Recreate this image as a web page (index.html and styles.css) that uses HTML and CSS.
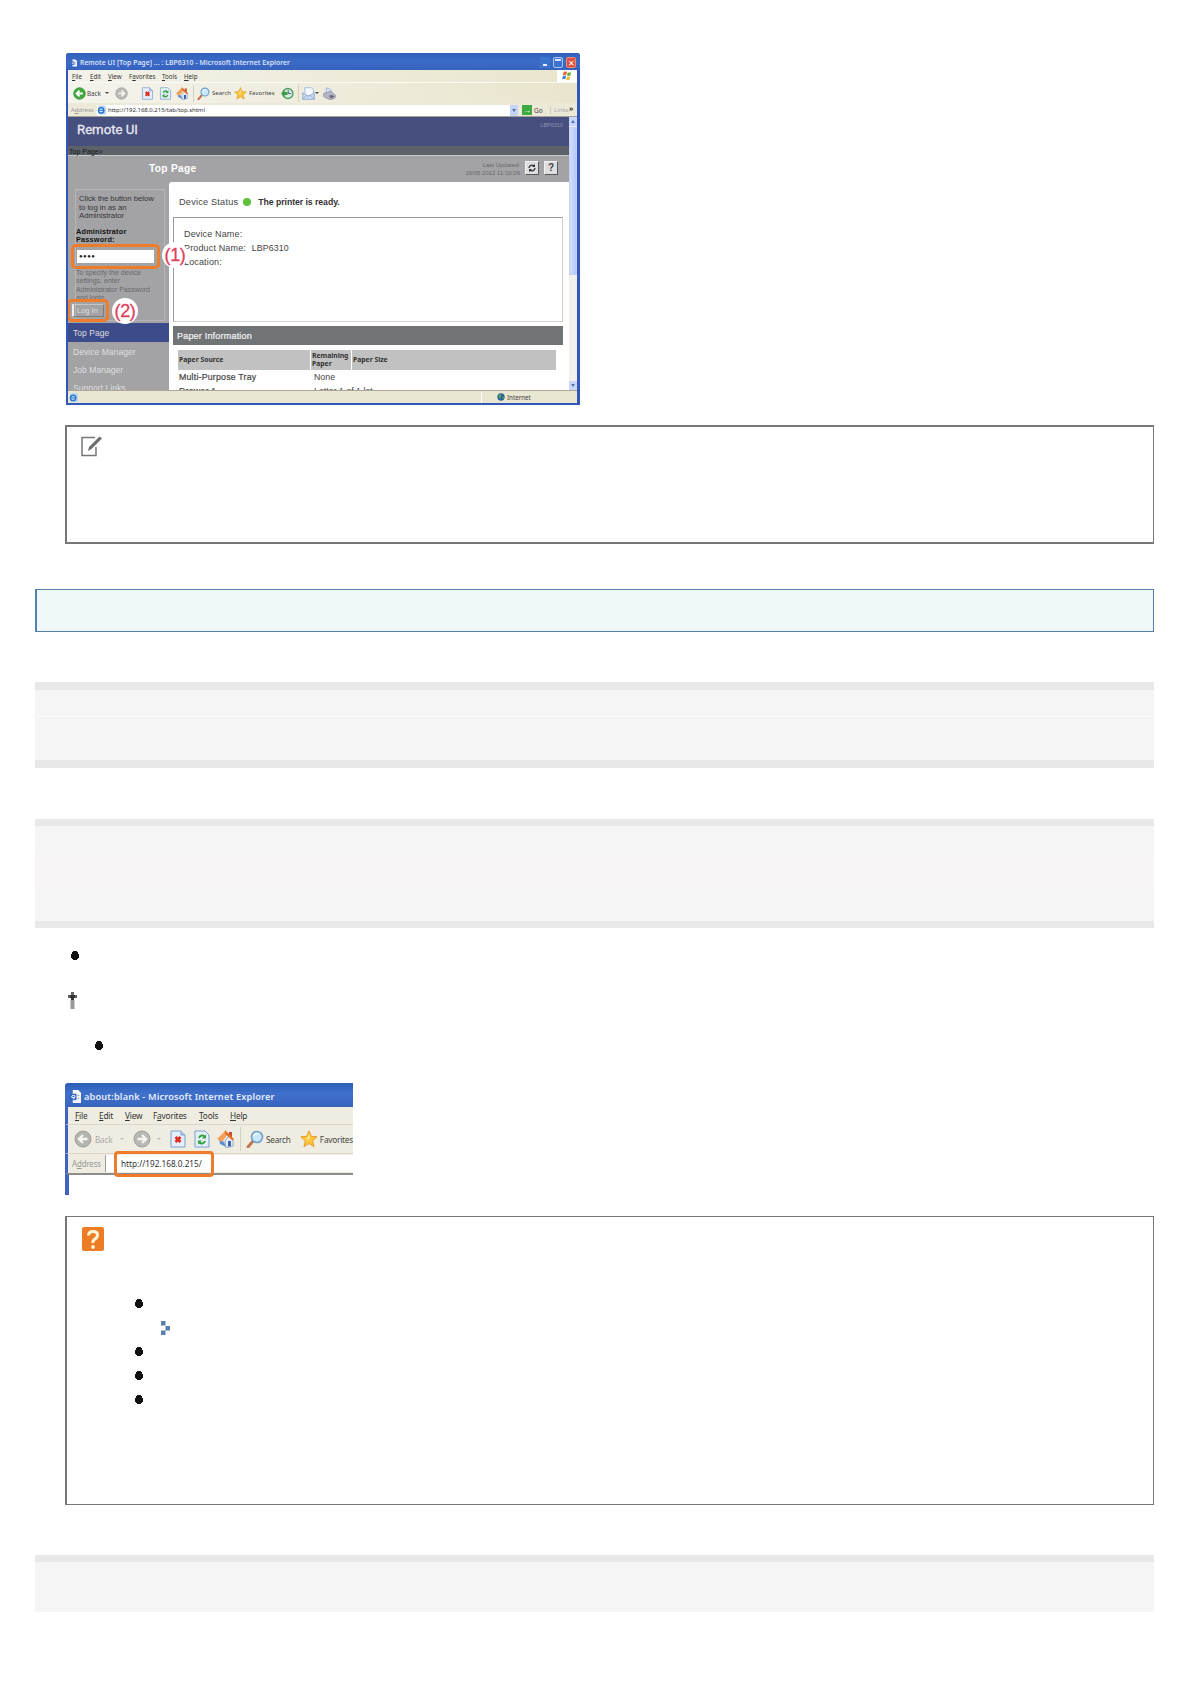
FILE: index.html
```
<!DOCTYPE html>
<html lang="en">
<head>
  <meta charset="UTF-8" />
  <meta name="viewport" content="width=device-width, initial-scale=1.0"/>
  <title>Remote UI</title>
  <link rel="stylesheet" href="styles.css">
</head>
<body>

  <!-- ICONS -->
  <svg class="sprite" aria-hidden="true">
    <symbol id="doc" viewBox="0 0 12 14">
      <path d="M3 0h6l3 3v11H3z" fill="#f4f6fa"/>
      <path d="M0 4h7v7H0z" fill="#2c62c0"/>
      <path d="M5.500 8H2a1.800 1.800 0 1 1 3.500-.5M5 9.500H3" fill="none" stroke="#fff"/>
      <path d="M8 6h2M8 9h2" stroke="#8096b8"/>
    </symbol>
    <symbol id="ie" viewBox="0 0 12 12">
      <path d="M2 0h8l2 2v10H2z" fill="#bcd4f2"/>
      <circle cx="5.500" cy="6.500" r="3.500" fill="#d9ecff" stroke="#2878c8" stroke-width="2"/>
      <path d="M3 6.500h6" stroke="#2878c8" stroke-width="1.500"/>
    </symbol>
    <symbol id="back" viewBox="0 0 18 18">
      <circle cx="9" cy="9" r="8" fill="#43a83e" stroke="#2b8b2b"/>
      <path d="M13.500 9H5m4-4L5 9l4 4" fill="none" stroke="#fff" stroke-width="2.600"/>
    </symbol>
    <symbol id="back-off" viewBox="0 0 18 18">
      <circle cx="9" cy="9" r="8" fill="#b5b5b0" stroke="#a1a19c"/>
      <path d="M13.500 9H5m4-4L5 9l4 4" fill="none" stroke="#f5f5f0" stroke-width="2.400"/>
    </symbol>
    <symbol id="forward" viewBox="0 0 18 18">
      <circle cx="9" cy="9" r="8" fill="#b9b9b4" stroke="#9f9f9b"/>
      <path d="M4.500 9H13M9 5l4 4-4 4" fill="none" stroke="#f5f5f0" stroke-width="2.400"/>
    </symbol>
    <symbol id="stop" viewBox="0 0 16 18">
      <path d="M1 1h10l4 4v12H1z" fill="#e5eefb" stroke="#7c9fce"/>
      <path d="M11 1v4h4" fill="#b9cdea" stroke="#7c9fce"/>
      <path d="M5.500 7l5 5m0-5l-5 5" stroke="#dc2f22" stroke-width="2.800"/>
    </symbol>
    <symbol id="refresh" viewBox="0 0 16 18">
      <path d="M1 1h10l4 4v12H1z" fill="#e5eefb" stroke="#7c9fce"/>
      <path d="M5 8c1-3 4-3 5.500-1.500M11 11c-1 3-4 3-5.500 1.500" fill="none" stroke="#31a13c" stroke-width="2"/>
      <path d="M12 4.500v4H8zM4 14.500v-4h4z" fill="#31a13c"/>
    </symbol>
    <symbol id="home" viewBox="0 0 18 18">
      <path d="M12 2h3v5h-3z" fill="#c94e28"/>
      <path d="M2 9l5 3 2 5-6-3z" fill="#5d8fd9"/>
      <path d="M8 11l4-5 4 4v6l-7 2z" fill="#e6eefb" stroke="#6b90c6" stroke-width=".7"/>
      <path d="M0 9l8-8 3 3-6 8z" fill="#f3a15a"/>
      <path d="M8 0l9 9-1.500 1.500L8 4z" fill="#e1702d"/>
      <path d="M11 11h3v5l-3 .8z" fill="#3b66ad"/>
    </symbol>
    <symbol id="search" viewBox="0 0 18 18">
      <path d="M7 11l-5 6" stroke="#c5784e" stroke-width="3" stroke-linecap="round"/>
      <circle cx="11" cy="7" r="5.500" fill="#c9e8fb" stroke="#6fa0cb" stroke-width="1.600"/>
      <path d="M8 6q1-3 4-2" fill="none" stroke="#fff" stroke-width="1.500"/>
    </symbol>
    <symbol id="star" viewBox="0 0 20 20">
      <path d="M10 1l2.600 6 6.400.6-5 4.300 1.600 6.600L10 15l-5.600 3.500L6 11.900 1 7.600 7.400 7z" fill="#fbc43a" stroke="#e3941d"/>
      <path d="M10 4l1 5-4 3z" fill="#ffeb98"/>
    </symbol>
    <symbol id="history" viewBox="0 0 18 18">
      <circle cx="9.500" cy="9" r="7" fill="#d6ebd7" stroke="#519f62" stroke-width="2"/>
      <path d="M10 4v5h4" fill="none" stroke="#4f6d9c" stroke-width="1.500"/>
      <path d="M0 9l5-5v3h4v4H5v3z" fill="#3a9d49"/>
    </symbol>
    <symbol id="mail" viewBox="0 0 18 18">
      <path d="M4 1h9l3 3v8H4z" fill="#f4f8ff" stroke="#8fa8d4"/>
      <path d="M1 8l8 5 8-5v9H1z" fill="#c9daf4" stroke="#7c9acd"/>
      <path d="M1 17l6-6m10 6l-6-6" stroke="#8aa5d1"/>
    </symbol>
    <symbol id="print" viewBox="0 0 18 18">
      <path d="M4 8l1-7 6 3 2 5z" fill="#dbe4f8" stroke="#93a3c7"/>
      <path d="M1 9l9-3 7 5v4l-7 3-9-5z" fill="#b5b6c6" stroke="#85879c"/>
      <path d="M8 12l4-1 4 2-5 3z" fill="#686a7c"/>
    </symbol>
    <symbol id="flag" viewBox="0 0 12 12">
      <path d="M2 1q2-1 4 0L5 5Q3 4 1 5z" fill="#e0672f"/>
      <path d="M7 1.500q2 1 4 0l-1 4q-2 1-4 0z" fill="#6eaa3e"/>
      <path d="M1 6q2-1 4 0l-1 4Q2 9 0 10z" fill="#4b83d4"/>
      <path d="M6 6.500q2 1 4 0l-1 4q-2 1-4 0z" fill="#eebd37"/>
    </symbol>
    <symbol id="globe" viewBox="0 0 12 12">
      <circle cx="6" cy="6" r="5.500" fill="#285e9f"/>
      <path d="M2 3l3-2 2 3-2 2 1 3-3-1zM8 5l3 1-2 4z" fill="#51a358"/>
    </symbol>
    <symbol id="dot" viewBox="0 0 8 9">
      <path d="M2 0h4v1h1v2h1v4H7v1H6v1H2V8H1V7H0V3h1V1h1z" fill="#111"/>
    </symbol>
  </svg>

  <div class="page">

    <!-- REMOTE UI WINDOW -->
    <div class="window">
      <div class="titlebar">
        <svg class="i-doc"><use href="#doc"/></svg>
        <span class="title">Remote UI [Top Page] ... : LBP6310 - Microsoft Internet Explorer</span>
        <span class="win-btn min"></span><span class="win-btn max"></span><span class="win-btn close">✕</span>
      </div>
      <div class="menubar">
        <span><u>F</u>ile</span><span><u>E</u>dit</span><span><u>V</u>iew</span><span>F<u>a</u>vorites</span><span><u>T</u>ools</span><span><u>H</u>elp</span>
        <div class="flag"><svg><use href="#flag"/></svg></div>
      </div>
      <div class="toolbar">
        <svg><use href="#back"/></svg><span class="t-back">Back</span><i class="arrow"></i>
        <svg class="t-fwd"><use href="#forward"/></svg>
        <svg class="t-stop"><use href="#stop"/></svg>
        <svg class="t-refresh"><use href="#refresh"/></svg>
        <svg class="t-home"><use href="#home"/></svg>
        <b class="sep"></b>
        <svg><use href="#search"/></svg><span class="t-search">Search</span>
        <svg><use href="#star"/></svg><span class="t-fav">Favorites</span>
        <svg><use href="#history"/></svg>
        <b class="sep"></b>
        <svg><use href="#mail"/></svg><i class="arrow"></i>
        <svg class="t-print"><use href="#print"/></svg>
      </div>
      <div class="addressbar">
        <span class="a-label">A<u>d</u>dress</span>
        <div class="a-input"><svg><use href="#ie"/></svg><span>http://192.168.0.215/tab/top.shtml</span><b class="a-drop"></b></div>
        <b class="a-go">→</b><span class="a-gotext">Go</span>
        <span class="a-links">Links</span><b class="a-more">»</b>
      </div>

      <div class="view">
        <div class="remote">
          <div class="brand"><h1>Remote UI</h1><span>LBP6310</span></div>
          <div class="crumb">Top Page&gt;</div>
          <div class="heading">
            <h2>Top Page</h2>
            <p>Last Updated:<br>16/05 2012 11:10:06</p>
            <b class="sq"><svg viewBox="0 0 10 10"><path d="M2 5a3 3 0 0 1 5-2M8 5a3 3 0 0 1-5 2" fill="none" stroke="#333" stroke-width="1.300"/><path d="M8 1v3H5zM2 9V6h3z" fill="#333"/></svg></b>
            <b class="sq">?</b>
          </div>
          <div class="columns">
            <div class="side">
              <div class="login">
                <p class="intro">Click the button below<br>to log in as an<br>Administrator</p>
                <p class="pw-label">Administrator<br>Password:</p>
                <div class="mark mark-pw"><div class="pw">●●●●</div><span class="callout c1">(1)</span></div>
                <p class="hint">To specify the device<br>settings, enter<br>Administrator Password<br>and login.</p>
                <div class="mark mark-login"><div class="btn">Log In</div><span class="callout c2">(2)</span></div>
              </div>
              <div class="nav">
                <a class="on">Top Page</a>
                <a>Device Manager</a>
                <a>Job Manager</a>
                <a>Support Links</a>
              </div>
            </div>
            <div class="main">
              <div class="status"><span>Device Status</span><i class="led"></i><b>The printer is ready.</b></div>
              <div class="info">
                <p>Device Name:</p>
                <p>Product Name: <span>LBP6310</span></p>
                <p>Location:</p>
              </div>
              <h3>Paper Information</h3>
              <div class="paper">
                <b>Paper Source</b><b>Remaining<br>Paper</b><b>Paper Size</b>
                <span class="src">Multi-Purpose Tray</span><span>None</span><span></span>
                <span class="src">Drawer 1</span><span>Letter 1 of 1 lot</span><span></span>
              </div>
            </div>
          </div>
        </div>
        <div class="scroll"><b class="up"></b><b class="thumb"></b><b class="down"></b></div>
      </div>
      <div class="statusbar"><svg><use href="#ie"/></svg><b></b><svg class="s-globe"><use href="#globe"/></svg><span>Internet</span></div>
    </div>

    <!-- NOTE -->
    <div class="note">
      <svg viewBox="0 0 22 21"><path d="M14 1.500H1v18h14V11" fill="none" stroke="#777" stroke-width="1.500"/><path d="M7 15l1-4L18.500.500l2.500 2L10.500 13z" fill="#6b6f73"/></svg>
    </div>

    <div class="section-title"></div>

    <div class="band band-1"><div class="band-line"></div></div>
    <div class="band band-2"></div>

    <!-- STEPS -->
    <div class="steps">
      <svg class="dot"><use href="#dot"/></svg>
      <svg class="dagger" viewBox="0 0 9 17"><path d="M3 0h3v3h3v3H6v2H3V6H0V3h3z" fill="#666"/><path d="M2.500 8h4v9h-4z" fill="#999"/><path d="M2 3h5v3H6v2H3V6H2z" fill="#333"/></svg>
      <svg class="dot inner"><use href="#dot"/></svg>
    </div>

    <!-- BLANK WINDOW -->
    <div class="window2">
      <div class="titlebar">
        <svg class="i-doc"><use href="#doc"/></svg>
        <span class="title">about:blank - Microsoft Internet Explorer</span>
      </div>
      <div class="menubar">
        <span><u>F</u>ile</span><span><u>E</u>dit</span><span><u>V</u>iew</span><span>F<u>a</u>vorites</span><span><u>T</u>ools</span><span><u>H</u>elp</span>
      </div>
      <div class="toolbar">
        <svg><use href="#back-off"/></svg><span class="t-back">Back</span><i class="arrow off"></i>
        <svg class="t-fwd"><use href="#forward"/></svg><i class="arrow off"></i>
        <svg class="t-stop"><use href="#stop"/></svg>
        <svg class="t-refresh"><use href="#refresh"/></svg>
        <svg class="t-home"><use href="#home"/></svg>
        <b class="sep"></b>
        <svg><use href="#search"/></svg><span class="t-search">Search</span>
        <svg><use href="#star"/></svg><span class="t-fav">Favorites</span>
      </div>
      <div class="addressbar">
        <span class="a-label">A<u>d</u>dress</span>
        <div class="a-input"><span class="url">http://192.168.0.215/</span></div>
      </div>
      <div class="blank"></div>
    </div>

    <!-- HELP -->
    <div class="help">
      <svg class="q" viewBox="0 0 22 24"><rect width="22" height="24" rx="2" fill="#ec7d25"/><path d="M6.500 8.500q0-4 4.500-4t4.500 3.500q0 2.500-2.500 4T11 16" fill="none" stroke="#fff3d8" stroke-width="3"/><circle cx="11" cy="20" r="1.900" fill="#fff3d8"/></svg>
      <svg class="dot"><use href="#dot"/></svg>
      <svg class="chev" viewBox="0 0 9 14"><path d="M0 0h4.500v4.500H0zM4.500 5H9v4.500H4.500zM0 9.500h4.500V14H0z" fill="#567fab"/></svg>
      <svg class="dot"><use href="#dot"/></svg>
      <svg class="dot"><use href="#dot"/></svg>
      <svg class="dot"><use href="#dot"/></svg>
    </div>

    <div class="band band-3"></div>
  </div>
</body>
</html>
```
FILE: styles.css
```
* {
  box-sizing: border-box;
}

body {
  margin: 0;
  background-color: #fff;
  font-family: "Liberation Sans", sans-serif;
}

h1, h2, h3, p {
  margin: 0;
}

svg {
  display: block;
  flex-shrink: 0;
}

.sprite {
  position: absolute;
  width: 0;
  height: 0;
}

.page {
  width: 1190px;
  height: 1684px;
  padding: 53px 36px 0 35px;
  overflow: hidden;
}

/* Browser window */
.window {
  width: 514px;
  height: 352px;
  margin-left: 31px;
  padding: 0 3px 2px 2px;
  background-color: #3158b8;
  border-radius: 3px 3px 0 0;
  display: flex;
  flex-direction: column;
  font-size: 6.5px;
  white-space: nowrap;
}

.titlebar {
  display: flex;
  align-items: center;
  color: #e4edfc;
  font-family: "Noto Sans", sans-serif;
  font-weight: 500;
}

.window .titlebar {
  height: 17px;
  padding: 2px 4px 0 5px;
  background: linear-gradient(#3160b8, #3c6bc8 50%, #3562bd);
  margin: 0 -3px 0 -2px;
  border-radius: 3px 3px 0 0;
}

.window .i-doc { width: 6px; height: 8px; }

.window .title {
  margin-left: 3px;
  margin-right: auto;
  font-size: 6.8px;
  letter-spacing: 0.08px;
}

.win-btn {
  width: 10px;
  height: 11px;
  margin-left: 3px;
  border-radius: 2px;
  background-color: #3b74cf;
  border: 1px solid #6f9be0;
}

.min { border-width: 0; box-shadow: inset 3px 0 #3b74cf, inset -3px 0 #3b74cf, inset 0 -2px #3b74cf, inset 0 -4px #e6eefc; }
.max { box-shadow: inset 0 0 0 1px #3b74cf, inset 0 3px #dce8fa; border-color: #a9c5ef; }
.close { background-color: #e1503f; border-color: #e98b80; color: #fff; font-size: 8px; line-height: 9px; text-align: center; }

.menubar {
  display: flex;
  align-items: center;
  color: #333;
  font-family: "Noto Sans", sans-serif;
}

.window .menubar {
  height: 12px;
  padding-left: 4px;
  background: linear-gradient(90deg, #f3f2ea, #e9e5cd);
  font-size: 6.2px;
}

.window .menubar span:nth-child(1) { width: 18px; }
.window .menubar span:nth-child(2) { width: 18px; }
.window .menubar span:nth-child(3) { width: 21px; }
.window .menubar span:nth-child(4) { width: 33px; }
.window .menubar span:nth-child(5) { width: 22px; }

.flag {
  width: 20px;
  height: 12px;
  margin-left: auto;
  padding: 1px 5px;
  background-color: #fff;
}

.flag svg { width: 10px; height: 10px; }

.toolbar {
  display: flex;
  align-items: center;
  color: #444;
  font-family: "Noto Sans", sans-serif;
}

.window .toolbar {
  height: 21px;
  padding-left: 5px;
  background: linear-gradient(90deg, #f4f3ec, #e9e5cd);
  border-top: 1px solid #fbfaf5;
}

.window .toolbar svg { width: 13px; height: 13px; }
.window .toolbar .t-back { margin-left: 1px; width: 18px; font-size: 6.2px; }

.arrow {
  border: 2px solid transparent;
  border-top-color: #444;
  border-bottom-width: 0;
}

.arrow.off { border-top-color: #bbb; }

.window .toolbar .t-fwd { margin-left: 6px; }
.window .toolbar .t-stop { margin-left: 13px; }
.window .toolbar .t-refresh { margin-left: 5px; }
.window .toolbar .t-home { margin-left: 4px; }

.sep {
  width: 1px;
  height: 17px;
  background-color: #d2d0c0;
}

.window .sep { margin: 0 3px 0 4px; }
.window .t-search { width: 22px; margin-left: 2px; font-size: 6px; }
.window .t-fav { width: 32px; margin-left: 2px; font-size: 6px; }
.window .toolbar .t-print { margin-left: 4px; }

.addressbar {
  display: flex;
  align-items: center;
  font-family: "Noto Sans", sans-serif;
}

.window .addressbar {
  height: 14px;
  padding: 2px 0 1px 3px;
  background-color: #ece9d8;
  border-bottom: 1px solid #a3a195;
}

.a-label { color: #999; }
.window .a-label { width: 26px; font-size: 6px; }

.a-input {
  display: flex;
  align-items: center;
  background-color: #fff;
  color: #333;
}

.window .a-input {
  width: 421px;
  height: 11px;
  font-size: 6px;
}

.window .a-input svg { width: 9px; height: 10px; }
.window .a-input span { margin-left: 2px; margin-right: auto; letter-spacing: -0.02px; }

.a-drop {
  width: 8px;
  height: 11px;
  background-color: #c4d3fa;
  display: flex;
  justify-content: center;
  align-items: center;
}

.a-drop::after {
  content: "";
  border: 2px solid transparent;
  border-top: 3px solid #5573ad;
  border-bottom: 0;
}

.a-go {
  width: 10px;
  height: 10px;
  margin: 0 2px 0 4px;
  background-color: #3daa42;
  color: #fff;
  font-size: 8px;
  line-height: 9px;
  text-align: center;
}

.a-gotext { color: #444; width: 16px; }
.a-links { padding-left: 3px; border-left: 1px solid #cfccba; color: #aaa; font-size: 6px; width: 19px; }
.a-more { color: #333; font-size: 7px; line-height: 7px; padding-bottom: 4px; }

/* Remote UI page */
.view {
  flex: 1;
  min-height: 0;
  display: flex;
}

.remote {
  flex: 1;
  height: 273px;
  overflow: hidden;
}

.brand {
  height: 29px;
  background-color: #474f7e;
  display: flex;
  justify-content: space-between;
  padding: 4px 6px 0 9px;
}

.brand h1 {
  font-size: 13.2px;
  line-height: 18px;
  font-weight: 400;
  font-family: Roboto, sans-serif;
  color: #e7e9f2;
  -webkit-text-stroke: 0.3px #e7e9f2;
}

.brand span { color: #8d93b5; font-size: 5.5px; line-height: 8px; }

.crumb {
  height: 10px;
  background-color: #5c6268;
  border-bottom: 1px solid #c9c9ca;
  color: #15171a;
  font-size: 7px;
  line-height: 11px;
  padding-left: 1px;
}

.heading {
  height: 26px;
  background-color: #a3a3a5;
  display: flex;
  align-items: center;
  padding: 0 11px 2px 0;
}

.heading h2 {
  margin-left: 81px;
  margin-right: auto;
  font-size: 10.2px;
  letter-spacing: 0.3px;
  color: #fff;
}

.heading p {
  text-align: right;
  font-size: 6px;
  line-height: 8px;
  color: #66676a;
  margin-top: 2px;
}

.sq {
  width: 14px;
  height: 14px;
  margin: 0 0 0 5px;
  background-color: #dedede;
  border: 1px solid #f2f2f2;
  border-right-color: #57585b;
  border-bottom-color: #57585b;
  font-size: 10px;
  line-height: 12px;
  text-align: center;
  color: #444;
}

.sq svg { width: 10px; height: 10px; margin: 1px; }

.columns {
  display: flex;
  height: 208px;
  background-color: #a3a3a5;
}

.side {
  width: 101px;
  color: #37383a;
}

.login {
  height: 132px;
  width: 90px;
  margin: 7px 0 2px 7px;
  border: 1px solid #b6b6b8;
  padding: 5px 0 0 2px;
  font-size: 7px;
}

.intro { font-size: 7.8px; line-height: 8.7px; margin-left: 1px; letter-spacing: -0.07px; }
.pw-label { font-weight: bold; font-size: 7.3px; line-height: 8px; margin: 7px 0 0 -2px; color: #111; letter-spacing: 0.2px; }
.hint { font-size: 7px; line-height: 8.300px; margin-left: -2px; color: #68696b; }

.mark {
  position: relative;
  border: 3px solid #ef7c2b;
  border-radius: 5px;
}

.mark-pw {
  width: 89px;
  height: 25px;
  margin: 0 0 0 -7px;
  padding: 3px;
}

.pw {
  height: 13px;
  width: 77px;
  background-color: #fff;
  font-size: 6px;
  line-height: 13px;
  padding-left: 2px;
  color: #222;
  letter-spacing: 0.5px;
}

.mark-login {
  width: 42px;
  height: 23px;
  margin: -3px 0 0 -11px;
  padding: 2px;
}

.btn {
  height: 13px;
  border: 1px solid #7c7c7e;
  border-left: 2px solid #eee;
  border-top-color: #c5c5c6;
  color: #dcdcdd;
  font-size: 7.5px;
  line-height: 11px;
  padding-left: 3px;
}

.callout {
  position: absolute;
  width: 26px;
  height: 26px;
  border-radius: 50%;
  background-color: #fff;
  color: #e0405c;
  font-size: 18px;
  line-height: 26px;
  text-align: center;
  letter-spacing: -0.3px;
  -webkit-text-stroke: 0.3px #e0405c;
}

.c1 { left: 88px; top: -5px; }
.c2 { left: 42px; top: -4px; }

.nav a {
  display: block;
  height: 18px;
  padding-left: 5px;
  font-size: 8.500px;
  line-height: 19px;
  letter-spacing: 0.05px;
  color: #dedee0;
}

.nav .on { height: 19px; line-height: 21px; background-color: #3c4b89; margin-bottom: 1px; }

.main {
  flex: 1;
  background-color: #fff;
  border-radius: 3px 0 0 0;
  padding: 13px 6px 0 4px;
  color: #444;
}

.status {
  display: flex;
  align-items: center;
  height: 14px;
  padding-left: 6px;
  font-size: 9.2px;
  letter-spacing: 0.2px;
}

.status b { font-size: 8.700px; letter-spacing: -0.05px; color: #333; }

.led {
  width: 8px;
  height: 8px;
  margin: 0 7px 0 5px;
  border-radius: 50%;
  background-color: #5cc23a;
}

.info {
  height: 105px;
  margin-top: 8px;
  padding: 9px 0 0 10px;
  border: 1px solid #cfcfd1;
  border-left-color: #999;
  border-top-color: #999;
  font-size: 9px;
  line-height: 14.2px;
  letter-spacing: 0.15px;
}

.info span { margin-left: 3px; font-size: 8.800px; }

.main h3 {
  height: 19px;
  margin-top: 4px;
  background-color: #717477;
  color: #f3f3f3;
  font-size: 9px;
  font-weight: 400;
  line-height: 20px;
  padding-left: 4px;
  letter-spacing: 0.2px;
  -webkit-text-stroke: 0.2px #f3f3f3;
}

.paper {
  display: grid;
  grid-template-columns: 132px 40px 204px;
  grid-template-rows: 20px 14px 15px;
  margin: 5px 0 0 5px;
  column-gap: 1px;
  font-size: 8.800px;
  line-height: 15px;
}

.paper b {
  display: flex;
  align-items: center;
  background-color: #c1c1c1;
  color: #333;
  font-family: "Noto Sans", sans-serif;
  font-size: 6.8px;
  line-height: 8px;
  padding-left: 1px;
}

.paper span { padding-left: 3px; }
.paper .src { padding-left: 1px; letter-spacing: 0.2px; -webkit-text-stroke: 0.2px #444; }

.scroll {
  width: 8px;
  background-color: #f1f0ec;
  display: flex;
  flex-direction: column;
}

.up, .down { height: 9px; background-color: #c8d6fb; overflow: hidden; }

.up::after, .down::after {
  content: "";
  display: block;
  width: 0;
  margin: 3px auto 0;
  border: 2px solid transparent;
  border-bottom: 3px solid #5573ad;
  border-top: 0;
}

.down { margin-top: auto; }
.down::after { border: 2px solid transparent; border-top: 3px solid #5573ad; border-bottom: 0; }
.thumb { height: 148px; margin-top: 1px; background: linear-gradient(90deg, #d2defc, #b6c8f6); border: 1px solid #c3d1f7; }

.statusbar {
  height: 13px;
  display: flex;
  align-items: center;
  background-color: #e9e6d1;
  border-top: 1px solid #aaa796;
  color: #444;
  font-family: "Noto Sans", sans-serif;
}

.statusbar svg { width: 9px; height: 9px; margin-left: 1px; }
.statusbar b { height: 11px; width: 1px; margin-left: 403px; background-color: #fff; }
.statusbar .s-globe { width: 8px; height: 8px; margin: 0 2px 0 15px; }
.statusbar span { font-size: 6.200px; }

/* Note box */
.note {
  height: 119px;
  margin: 20px 0 0 30px;
  padding: 9px 0 0 14px;
  border: 2px solid #777;
  border-right-width: 1px;
}

.note svg { width: 22px; height: 21px; }

.section-title {
  height: 43px;
  margin-top: 45px;
  background-color: #eff8f8;
  border: 1px solid #577fab;
  border-left-width: 2px;
}

/* Gray bands */
.band {
  border: 0 solid #e8e8e8;
  background-color: #f5f5f5;
}

.band-1 {
  height: 86px;
  margin-top: 50px;
  padding: 26px 2px 0 2px;
  border-width: 8px 0;
}

.band-line { height: 2px; background: linear-gradient(#fff 50%, #f0f0f0 50%); }

.band-2 {
  height: 109px;
  margin-top: 51px;
  border-width: 7px 0;
  background: linear-gradient(#f5f5f5 20%, #f7f5f6 30%, #f7f5f6 65%, #f5f5f5 75%);
}

.band-3 {
  height: 57px;
  margin-top: 50px;
  border-top-width: 7px;
}

/* Bullets */
.dot { width: 8px; height: 9px; }

.steps {
  height: 155px;
  padding: 23px 0 0 36px;
}

.dagger { width: 9px; height: 17px; margin: 32px 0 32px -3px; }
.inner { margin-left: 24px; }

/* Blank page window */
.window2 {
  width: 288px;
  height: 112px;
  margin-left: 30px;
  overflow: hidden;
  display: flex;
  flex-direction: column;
  white-space: nowrap;
}

.window2 .titlebar {
  height: 24px;
  padding: 2px 0 0 5px;
  background: linear-gradient(#2d5eb6, #3f70cb 45%, #3864bd);
  border-radius: 3px 0 0 0;
}

.window2 .i-doc { width: 11px; height: 13px; }
.window2 .title { margin-left: 3px; font-size: 9.2px; font-weight: 600; letter-spacing: 0.17px; }

.window2 .menubar, .window2 .toolbar, .window2 .addressbar {
  border-left: 3px solid #4063bd;
  background-color: #efede1;
}

.window2 .menubar { height: 17px; padding-left: 7px; font-size: 8.3px; letter-spacing: -0.2px; }
.window2 .menubar span:nth-child(1) { width: 24px; }
.window2 .menubar span:nth-child(2) { width: 26px; }
.window2 .menubar span:nth-child(3) { width: 28px; }
.window2 .menubar span:nth-child(4) { width: 46px; }
.window2 .menubar span:nth-child(5) { width: 31px; }

.window2 .toolbar { height: 29px; padding-left: 6px; font-size: 8.2px; letter-spacing: -0.2px; border-top: 1px solid #dcd9cb; }
.window2 .toolbar svg { width: 18px; height: 18px; }
.window2 .t-back { color: #aaa; width: 25px; margin-left: 3px; }
.window2 .toolbar .t-fwd { margin-left: 9px; }
.window2 .t-fwd + .arrow { margin-left: 6px; }
.window2 .toolbar .t-stop { margin-left: 9px; width: 16px; }
.window2 .toolbar .t-refresh { margin-left: 8px; width: 16px; }
.window2 .toolbar .t-home { margin-left: 7px; }
.window2 .sep { height: 24px; margin: 0 5px; }
.window2 .t-search { width: 34px; margin-left: 2px; }
.window2 .t-fav { margin-left: 2px; }

.window2 .addressbar { height: 20px; padding-left: 4px; border-top: 1px solid #dcd9cb; font-size: 8px; }
.window2 .a-label { width: 33px; letter-spacing: -0.2px; }
.window2 .a-input { flex: 1; height: 17px; border-left: 1px solid #999; }

.url {
  position: relative;
  margin-left: 15px;
  font-size: 8.2px;
}

/* orange frame round the typed address */
.url::after {
  content: "";
  position: absolute;
  left: -7px;
  top: -7px;
  width: 94px;
  height: 20px;
  border: 3px solid #ef7c2b;
  border-radius: 4px;
}

.blank {
  flex: 1;
  background-color: #fff;
  border-left: 4px solid #4063bd;
  border-top: 2px solid #8d8d8d;
}

/* Help box */
.help {
  height: 289px;
  margin: 21px 0 0 30px;
  padding: 10px 0 0 68px;
  border: 1px solid #777;
  border-left-width: 2px;
}

.help .q { width: 22px; height: 24px; margin: 0 0 48px -53px; }
.help .dot { margin-bottom: 15px; }
.help .chev { width: 9px; height: 14px; margin: -2px 0 12px 26px; }
```
